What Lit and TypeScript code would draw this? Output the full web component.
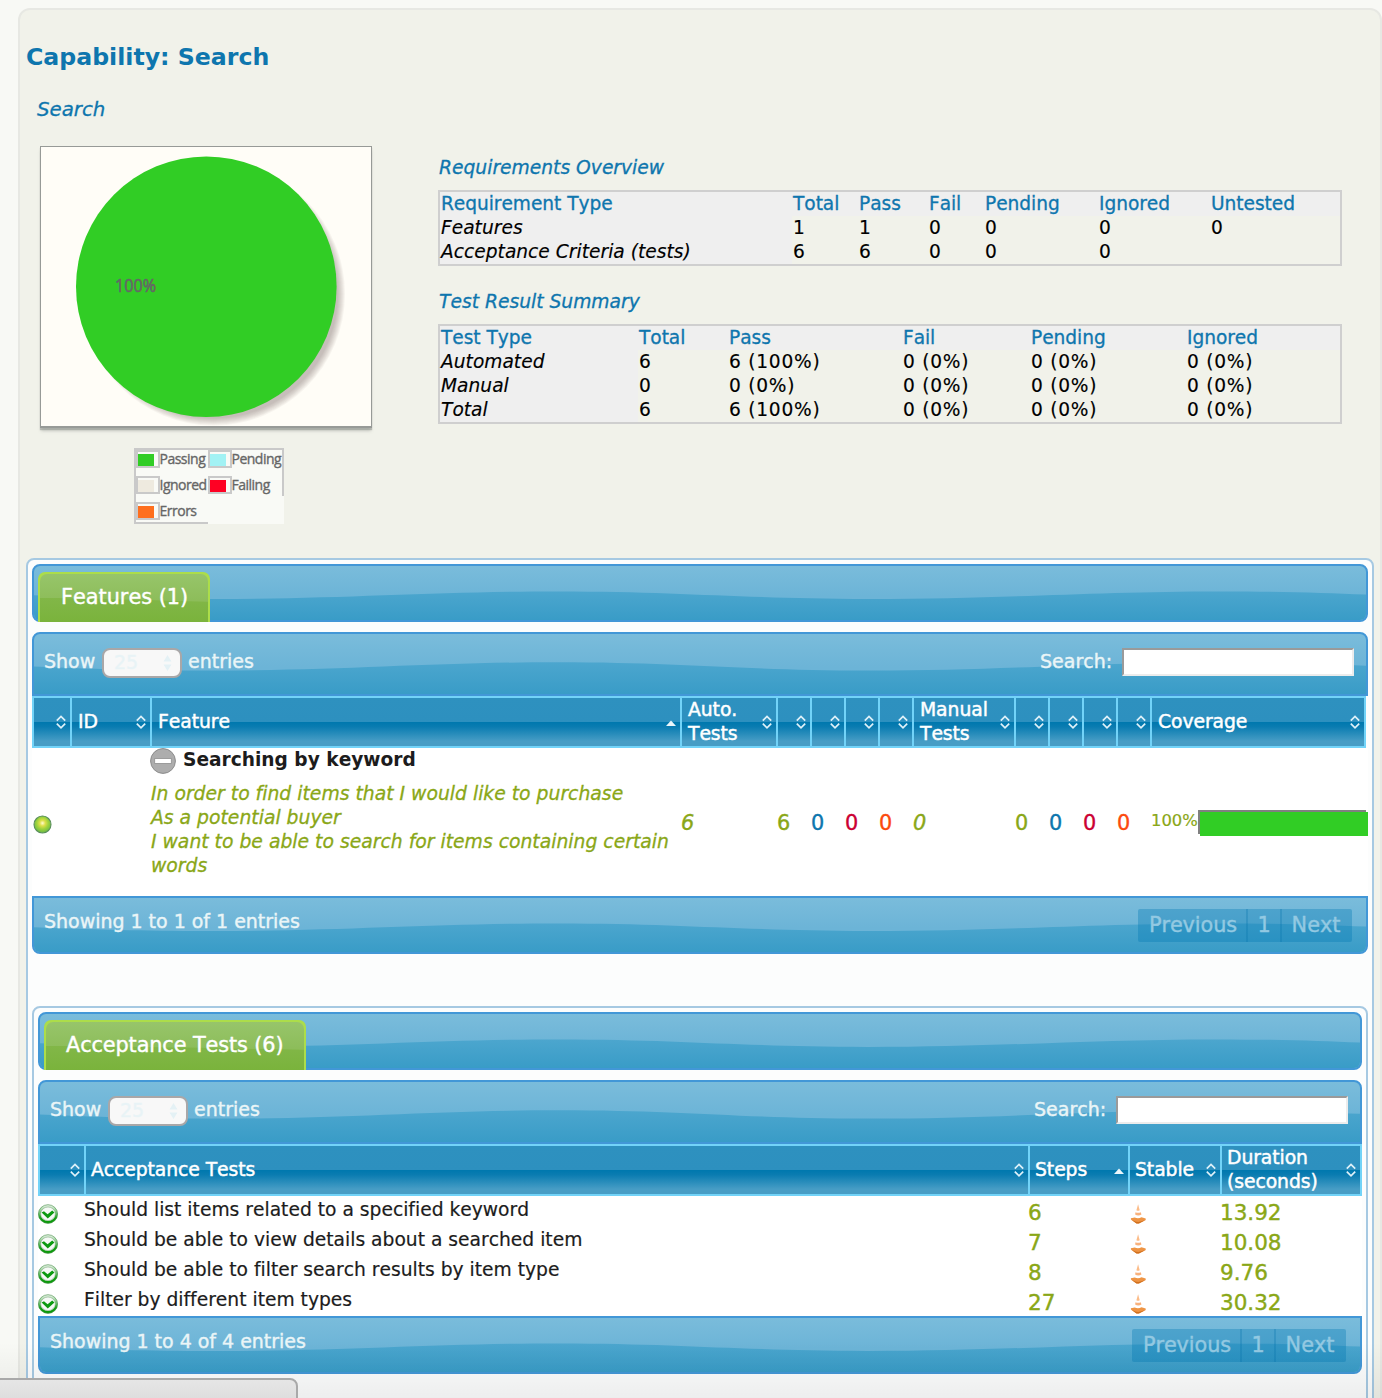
import { LitElement, html, css, svg, nothing } from "lit";
import { customElement, property } from "lit/decorators.js";
import { classMap } from "lit/directives/class-map.js";

const base = css`
  :host {
    display: block;
    box-sizing: border-box;
    font-family: "DejaVu Sans", Verdana, sans-serif;
    font-kerning: none;
    font-variant-ligatures: none;
  }
  * {
    box-sizing: border-box;
  }
`;

@customElement("gloss-wave")
class GlossWave extends LitElement {
  @property() tone = "blue";

  static styles = css`
    :host {
      position: absolute;
      inset: 0;
      overflow: hidden;
      border-radius: inherit;
    }
    .art {
      display: block;
      width: 100%;
      height: 100%;
    }
  `;

  render() {
    const green = this.tone === "green";
    const c = green
      ? ["#97c56a", "#8dbd5a", "#82b748", "#7ab33c"]
      : ["#7abcdb", "#6cb4d7", "#4ca6ce", "#399cc7"];
    const d = green
      ? "M0 50 C45 50 120 55 168 58 V100 H0 Z"
      : "M0 54 C70 59 125 61 180 61 C310 61 400 47 524 47 C650 47 710 61 835 61 C970 61 1060 47 1186 47 C1250 47 1290 50 1332 53 V100 H0 Z";
    return html`<svg class="art" viewBox=${green ? "0 0 168 100" : "0 0 1332 100"} preserveAspectRatio="none">
      <defs>
        <linearGradient id="t" x1="0" y1="0" x2="0" y2="1">
          <stop offset="0" stop-color=${c[0]}></stop>
          <stop offset=".55" stop-color=${c[1]}></stop>
        </linearGradient>
        <linearGradient id="b" gradientUnits="userSpaceOnUse" x1="0" y1="47" x2="0" y2="100">
          <stop offset="0" stop-color=${c[2]}></stop>
          <stop offset="1" stop-color=${c[3]}></stop>
        </linearGradient>
      </defs>
      <rect width="1332" height="100" fill="url(#t)"></rect>
      <path d=${d} fill="url(#b)"></path>
    </svg>`;
  }
}

@customElement("tab-bar")
class TabBar extends LitElement {
  @property() label = "";
  @property({ type: Boolean }) wide = false;

  static styles = [
    base,
    css`
      .bar {
        position: relative;
        display: flex;
        height: 58px;
        padding: 6px 0 0 4px;
        border: 2px solid #4297d7;
        border-radius: 8px;
        background: #4297d7;
      }
      .bar > gloss-wave {
        border-radius: 6px;
      }
      .tab {
        position: relative;
        width: 172px;
        height: 50px;
        padding-left: 21px;
        border: 2px solid #acdd4a;
        border-bottom: 0;
        border-radius: 7px 7px 0 0;
        background: #acdd4a;
        color: #fff;
        font-size: 20.8px;
        line-height: 47px;
        white-space: nowrap;
      }
      .tab.wide {
        width: 262px;
        padding-left: 20px;
        letter-spacing: -0.1px;
      }
      .text {
        position: relative;
        -webkit-text-stroke: 0.4px #fff;
      }
    `,
  ];

  render() {
    return html`<div class="bar">
      <gloss-wave></gloss-wave>
      <div class=${classMap({ tab: true, wide: this.wide })}>
        <gloss-wave tone="green"></gloss-wave>
        <span class="text">${this.label}</span>
      </div>
    </div>`;
  }
}

@customElement("table-toolbar")
class TableToolbar extends LitElement {
  static styles = [
    base,
    css`
      .bar {
        position: relative;
        display: flex;
        align-items: flex-start;
        height: 64px;
        padding: 14px 12px 0 10px;
        border: 2px solid #4297d7;
        border-radius: 8px 8px 0 0;
        background: #4297d7;
        color: #eaf5f7;
        font-size: 19px;
        line-height: 26px;
        white-space: nowrap;
        -webkit-text-stroke: 0.4px #eaf5f7;
      }
      .bar > * {
        position: relative;
      }
      .bar > gloss-wave {
        position: absolute;
        border-radius: 6px 6px 0 0;
      }
      .show {
        width: 58px;
      }
      .select {
        display: flex;
        justify-content: space-between;
        align-items: center;
        width: 80px;
        height: 30px;
        padding: 0 8px 0 10px;
        margin-right: 6px;
        border: 2px solid #a9a7a8;
        border-radius: 8px;
        background: #f8f8f8;
        color: #e8f3f6;
        line-height: 24px;
      }
      .value {
        margin-top: -2px;
      }
      .search {
        margin-left: auto;
        width: 82px;
      }
      .input {
        width: 232px;
        height: 28px;
        border: 2px solid;
        border-color: #9a9a9a #ececec #ececec #9a9a9a;
        background: #fff;
      }
    `,
  ];

  render() {
    return html`<div class="bar">
      <gloss-wave></gloss-wave>
      <span class="show">Show</span>
      <span class="select"
        ><span class="value">25</span
        ><svg width="9" height="18" viewBox="0 0 9 18" fill="#e4f1f5">
          <path d="M4.5 1 L8.5 7.5 H0.5 Z M4.5 17 L0.5 10.5 H8.5 Z"></path></svg
      ></span>
      <span>entries</span>
      <span class="search">Search:</span>
      <span class="input"></span>
    </div>`;
  }
}

@customElement("table-footer")
class TableFooter extends LitElement {
  @property() label = "";

  static styles = [
    base,
    css`
      .bar {
        position: relative;
        display: flex;
        justify-content: space-between;
        height: 58px;
        padding: 11px 14px 0 10px;
        border: 2px solid #4297d7;
        border-radius: 0 0 8px 8px;
        background: #4297d7;
        color: #eaf5f7;
        font-size: 19px;
        line-height: 24px;
        white-space: nowrap;
      }
      .bar > gloss-wave {
        border-radius: 0 0 6px 6px;
      }
      .label {
        position: relative;
        letter-spacing: -0.02px;
        -webkit-text-stroke: 0.4px #eaf5f7;
      }
      .pages {
        position: relative;
        display: flex;
        gap: 2px;
        height: 33px;
        background: linear-gradient(90deg, transparent 108px, rgba(0, 116, 174, 0.52) 108px 110px, transparent 110px 142px, rgba(0, 116, 174, 0.52) 142px 144px, transparent 144px);
        border-radius: 2px;
        overflow: hidden;
      }
      .page {
        width: 32px;
        background: rgba(0, 120, 178, 0.34);
        color: #93c9e2;
        font-size: 20.8px;
        line-height: 32px;
        text-align: center;
        -webkit-text-stroke: 0.4px #93c9e2;
      }
      .page.previous {
        width: 108px;
        padding-left: 2px;
        letter-spacing: -0.1px;
      }
      .page.next {
        width: 70px;
        padding-right: 2px;
      }
    `,
  ];

  render() {
    return html`<div class="bar">
      <gloss-wave></gloss-wave>
      <span class="label">${this.label}</span>
      <div class="pages">
        <span class="page previous">Previous</span><span class="page">1</span><span class="page next">Next</span>
      </div>
    </div>`;
  }
}

type Head = { text?: string; up?: boolean };

@customElement("table-head")
class TableHead extends LitElement {
  @property({ attribute: false }) heads: Head[] = [];
  @property() kind = "features";

  static styles = [
    base,
    css`
      .row {
        display: grid;
        height: 52px;
        border: 2px solid #72d3f8;
        border-left: 0;
        background: linear-gradient(#2e91bf, #2d90bf 50%, #0078ae 51%, #0a7cb1 60%, #479dc5 90%, #479dc5);
        color: #fff;
        font-size: 18.8px;
        line-height: 24px;
      }
      .features {
        width: 1334px;
        grid-template-columns: 38px 80px 530px 96px repeat(4, 34px) 102px repeat(4, 34px) 1fr;
      }
      .tests {
        grid-template-columns: 46px 944px 100px 92px 1fr;
      }
      .cell {
        display: flex;
        align-items: center;
        justify-content: space-between;
        border-left: 2px solid #72d3f8;
        padding: 0 4px 0 6px;
        min-width: 0;
      }
      .tests .cell {
        padding-left: 5px;
      }
      .label {
        padding-bottom: 0;
        margin-top: 0;
        margin-bottom: 0.5px;
        white-space: pre-line;
        letter-spacing: -0.08px;
        -webkit-text-stroke: 0.45px #fff;
      }
      .sort {
        flex: none;
      }
    `,
  ];

  render() {
    return html`<div class="row ${this.kind}">
      ${this.heads.map(
        (h) => html`<div class="cell">
          <span class="label">${h.text ?? nothing}</span>
          <svg class="sort" width="10" height="14" viewBox="0 0 10 14">
            ${h.up
              ? svg`<path d="M0 11 L5 5.6 L10 11 Z" fill="#eaf6fb"></path>`
              : svg`<path d="M.8 5.6 L5 1.4 L9.2 5.6 M.8 8.6 L5 12.8 L9.2 8.6" fill="none" stroke="#dff1f9" stroke-width="1.7"></path>`}
          </svg>
        </div>`
      )}
    </div>`;
  }
}

@customElement("result-chart")
class ResultChart extends LitElement {
  static styles = [
    base,
    css`
      .frame {
        width: 332px;
        height: 282px;
        border: 1px solid #979a97;
        border-bottom-width: 2px;
        background: #fffdf7;
        box-shadow: 0 2px 1px rgba(120, 125, 120, 0.4), 0 4px 3px -1px rgba(120, 125, 120, 0.35);
      }
      .pie {
        display: block;
        margin: -1px;
      }
      .share {
        font: 17.5px "Open Sans", "Noto Sans", sans-serif;
        fill: #666;
        stroke: #666;
        stroke-width: 0.6px;
      }
      .legend {
        position: relative;
        display: grid;
        grid-template-columns: 72px 1fr;
        grid-template-rows: 26px 26px 1fr;
        width: 150px;
        height: 76px;
        margin: 20px 0 0 94px;
        border: 2px solid #c9c9c9;
        border-right: 0;
        border-bottom: 0;
        background: #f9faf6;
        color: #666;
        font: 14px/18px "Open Sans", "Noto Sans", sans-serif;
        letter-spacing: -0.5px;
        -webkit-text-stroke: 0.35px #666;
      }
      .legend::after {
        content: "";
        position: absolute;
        right: 0;
        top: 0;
        width: 2px;
        height: 46px;
        background: #c9c9c9;
      }
      .entry {
        display: flex;
        white-space: nowrap;
      }
      .entry.last {
        border-bottom: 2px solid #c9c9c9;
      }
      .swatch {
        flex: none;
        width: 24px;
        height: 18px;
        padding: 2px 4px 0 0;
        margin-right: -0.5px;
        border: 2px solid #c9c9c9;
      }
      .fill {
        display: block;
        height: 12px;
      }
      .passing {
        background: #31cd25;
      }
      .pending {
        background: #a2f2f4;
      }
      .ignored {
        background: #eeeadf;
      }
      .failing {
        background: #fe0123;
      }
      .errors {
        background: #fe6f1e;
      }
    `,
  ];

  render() {
    const names = ["Passing", "Pending", "Ignored", "Failing", "Errors"];
    return html`
      <div class="frame">
        <svg class="pie" width="331" height="280" viewBox="40 146 331 280">
          ${[0, 1, 2, 3, 4, 5, 6, 7].map(
            (i) => svg`<circle cx="213.5" cy="294" r=${131.5 - i} fill="#5a5353" fill-opacity=".05"></circle>`
          )}
          <circle cx="206.3" cy="286.7" r="130.3" fill="#31cd25"></circle>
          <text class="share" x="115" y="291.5" textLength="41" lengthAdjust="spacingAndGlyphs">100%</text>
        </svg>
      </div>
      <div class="legend">
        ${names.map(
          (n) => html`<div class=${classMap({ entry: true, last: n === "Errors" })}>
            <span class="swatch"><span class="fill ${n.toLowerCase()}"></span></span>${n}
          </div>`
        )}
      </div>
    `;
  }
}

@customElement("summary-table")
class SummaryTable extends LitElement {
  @property() caption = "";
  @property() kind = "requirements";
  @property({ attribute: false }) rows: string[][] = [];

  static styles = [
    base,
    css`
      .caption {
        padding: 1px 0 10px 1px;
        color: #0e76ae;
        font-size: 18.7px;
        font-style: italic;
        line-height: 24px;
        -webkit-text-stroke: 0.3px #0e76ae;
      }
      .table {
        width: 904px;
        border: 2px solid #cfcfcf;
        color: #000;
        font-size: 18.6px;
        line-height: 24px;
        -webkit-text-stroke: 0.15px #000;
      }
      .row {
        display: grid;
        height: 24px;
      }
      .requirements .row {
        grid-template-columns: 352px 66px 70px 56px 114px 112px 1fr;
      }
      .results .row {
        grid-template-columns: 198px 90px 174px 128px 156px 1fr;
      }
      .cell {
        padding-left: 1px;
        white-space: nowrap;
        letter-spacing: 0.75px;
      }
      .row.head {
        background: #efefef;
        color: #0e76ae;
        -webkit-text-stroke: 0.3px #0e76ae;
      }
      .row.head .cell {
        letter-spacing: -0.05px;
      }
      .cell.first {
        letter-spacing: 0.03px;
        background: #efefef;
        font-style: italic;
      }
      .row.head .cell.first {
        font-style: normal;
      }
    `,
  ];

  render() {
    return html`<div class="caption">${this.caption}</div>
      <div class="table ${this.kind}">
        ${this.rows.map(
          (r, i) => html`<div class=${classMap({ row: true, head: i === 0 })}>
            ${r.map((c, j) => html`<span class=${classMap({ cell: true, first: j === 0 })}>${c}</span>`)}
          </div>`
        )}
      </div>`;
  }
}

const tick = html`<svg width="20" height="20" viewBox="0 0 20 20">
  <defs>
    <linearGradient id="ring" x1="0" y1="0" x2="0" y2="1">
      <stop offset="0" stop-color="#dcefdc"></stop>
      <stop offset=".4" stop-color="#7cc67c"></stop>
      <stop offset=".75" stop-color="#12a012"></stop>
      <stop offset="1" stop-color="#079a07"></stop>
    </linearGradient>
  </defs>
  <ellipse cx="10" cy="10" rx="8.6" ry="8.2" fill="#f6f9f6" stroke="url(#ring)" stroke-width="2.4"></ellipse>
  <ellipse cx="10" cy="10" rx="9.6" ry="9.3" fill="none" stroke="#4f8f4f" stroke-width=".6"></ellipse>
  <ellipse cx="10" cy="9.8" rx="7.3" ry="6.8" fill="none" stroke="#7aa07a" stroke-width=".5"></ellipse>
  <path d="M3.6 8.6 L6 7.2 L9.6 10.2 L14.2 6.6 L16.4 8.4 L9.8 14.4 Z" fill="#0c9a10"></path>
</svg>`;

const cone = html`<svg width="18" height="20" viewBox="-2.5 0 18 20">
  <path d="M7.6 .3 L5.9 6.2 Q7.7 7.2 9.2 6.2 Z" fill="#fcbc88"></path>
  <path d="M5 8.2 Q7.7 9.2 10.2 8.2 L11 10.6 Q7.7 12.6 4.6 10.6 Z" fill="#f9b17c"></path>
  <path d="M4.2 13.4 Q7.7 15 11 13.2 L15.2 14.6 V16 L8.4 19.4 L6 19.4 L.4 15.6 V14.2 Z" fill="#ee9444"></path>
  <path d="M.8 15.8 L6 19.4 L8.4 19.4 L15.2 16 L8 18 L5.6 17.8 Z" fill="#d0701f"></path>
</svg>`;

@customElement("app-root")
class AppRoot extends LitElement {
  static styles = [
    base,
    css`
      :host {
        position: relative;
        height: 1398px;
        overflow: hidden;
        background: #f8f9f5;
        padding: 8px 0 0 18px;
      }
      .page {
        width: 1364px;
        height: 1420px;
        padding: 0 6px;
        border: 2px solid #e7e8e3;
        border-radius: 12px;
        background: #f1f2ea;
      }
      .title {
        margin: 0;
        padding-top: 32px;
        color: #0e76ae;
        font-size: 23.65px;
        font-weight: bold;
        line-height: 30px;
      }
      .subtitle {
        margin: 24px 0 0 11px;
        color: #0e76ae;
        font-size: 19.8px;
        font-style: italic;
        line-height: 27px;
        height: 24px;
        -webkit-text-stroke: 0.3px #0e76ae;
      }
      .overview {
        display: flex;
        height: 438px;
        padding: 26px 0 0 14px;
      }
      .chart {
        width: 398px;
      }
      .tables {
        display: flex;
        flex-direction: column;
        gap: 23px;
        padding-top: 9px;
      }
      .panel {
        width: 1348px;
        height: 900px;
        padding: 4px;
        border: 2px solid #a6c9e2;
        border-radius: 8px;
        background: #fcfdfd;
      }
      .panel.inner {
        width: 1336px;
        height: 440px;
        margin-top: 52px;
      }
      .gap {
        height: 10px;
      }
      .feature {
        display: grid;
        grid-template-columns: 38px 80px 530px 96px repeat(4, 34px) 102px repeat(4, 34px) 1fr;
        align-items: center;
        height: 148px;
        background: #fff;
        color: #8aa717;
        font-size: 20.8px;
      }
      .count {
        padding: 1px 0 0 1px;
        -webkit-text-stroke: 0.4px currentColor;
      }
      .lamp {
        display: block;
        margin: 4px 0 0 1px;
      }
      .story {
        align-self: start;
      }
      .name {
        display: flex;
        height: 34px;
        color: #1c1c1c;
        font-size: 18.6px;
        font-weight: bold;
        line-height: 24px;
      }
      .toggle {
        margin-right: 7px;
      }
      .narrative {
        padding-left: 1px;
        font-size: 18.8px;
        font-style: italic;
        line-height: 24px;
        white-space: pre;
        -webkit-text-stroke: 0.3px #8aa717;
      }
      .blue {
        color: #0e76ae;
      }
      .red {
        color: #cc0033;
      }
      .orange {
        color: #fc4a0e;
      }
      .slant {
        font-style: italic;
      }
      .coverage {
        display: flex;
        margin-top: -1px;
      }
      .percent {
        width: 48px;
        padding-left: 1px;
        font-size: 16.4px;
        line-height: 22px;
        -webkit-text-stroke: 0.2px currentColor;
      }
      .track {
        width: 168px;
        height: 24px;
        border: 2px solid #808080;
        border-right: 0;
        border-bottom: 0;
      }
      .amount {
        width: 168px;
        height: 24px;
        background: #31cd25;
      }
      .test {
        display: grid;
        grid-template-columns: 46px 944px 100px 92px 1fr;
        height: 30px;
        background: #fff;
        color: #8aa717;
        font-size: 21.5px;
        line-height: 33px;
        -webkit-text-stroke: 0.4px currentColor;
      }
      .test svg {
        display: block;
        margin-top: 7.5px;
      }
      .label {
        color: #1c1c1c;
        font-size: 18.7px;
        line-height: 27px;
        -webkit-text-stroke: 0.2px currentColor;
      }
      .shade {
        position: absolute;
        left: 0;
        right: 0;
        bottom: 0;
        height: 56px;
        background: linear-gradient(rgba(0, 0, 0, 0), rgba(0, 0, 0, 0.06));
        pointer-events: none;
      }
      .status {
        position: absolute;
        left: -2px;
        bottom: -2px;
        width: 300px;
        height: 22px;
        border: 2px solid #a9a9a9;
        border-radius: 0 8px 0 0;
        background: linear-gradient(#e6e6e6, #dedede);
      }
    `,
  ];

  render() {
    const requirements = [
      ["Requirement Type", "Total", "Pass", "Fail", "Pending", "Ignored", "Untested"],
      ["Features", "1", "1", "0", "0", "0", "0"],
      ["Acceptance Criteria (tests)", "6", "6", "0", "0", "0", ""],
    ];
    const results = [
      ["Test Type", "Total", "Pass", "Fail", "Pending", "Ignored"],
      ["Automated", "6", "6 (100%)", "0 (0%)", "0 (0%)", "0 (0%)"],
      ["Manual", "0", "0 (0%)", "0 (0%)", "0 (0%)", "0 (0%)"],
      ["Total", "6", "6 (100%)", "0 (0%)", "0 (0%)", "0 (0%)"],
    ];
    const featureHeads: Head[] = [
      {}, { text: "ID" }, { text: "Feature", up: true }, { text: "Auto.\nTests" }, {}, {}, {}, {},
      { text: "Manual\nTests" }, {}, {}, {}, {}, { text: "Coverage" },
    ];
    const testHeads: Head[] = [
      {}, { text: "Acceptance Tests" }, { text: "Steps", up: true }, { text: "Stable" }, { text: "Duration\n(seconds)" },
    ];
    const counts = [
      ["6", "slant"], ["6", ""], ["0", "blue"], ["0", "red"], ["0", "orange"],
      ["0", "slant"], ["0", ""], ["0", "blue"], ["0", "red"], ["0", "orange"],
    ];
    const tests = [
      ["Should list items related to a specified keyword", "6", "13.92"],
      ["Should be able to view details about a searched item", "7", "10.08"],
      ["Should be able to filter search results by item type", "8", "9.76"],
      ["Filter by different item types", "27", "30.32"],
    ];
    const narrative =
      "In order to find items that I would like to purchase\nAs a potential buyer\nI want to be able to search for items containing certain\nwords";

    return html`
      <div class="page">
        <h2 class="title">Capability: Search</h2>
        <div class="subtitle">Search</div>
        <div class="overview">
          <result-chart class="chart"></result-chart>
          <div class="tables">
            <summary-table caption="Requirements Overview" .rows=${requirements}></summary-table>
            <summary-table caption="Test Result Summary" kind="results" .rows=${results}></summary-table>
          </div>
        </div>
        <div class="panel">
          <tab-bar label="Features (1)"></tab-bar>
          <div class="gap"></div>
          <table-toolbar></table-toolbar>
          <table-head .heads=${featureHeads}></table-head>
          <div class="feature">
            <svg class="lamp" width="19" height="19" viewBox="0 0 19 19">
              <defs>
                <radialGradient id="glow" cx=".5" cy=".42" r=".55">
                  <stop offset="0" stop-color="#fffbd0"></stop>
                  <stop offset=".3" stop-color="#dde04a"></stop>
                  <stop offset=".62" stop-color="#9fd23c"></stop>
                  <stop offset="1" stop-color="#6cbb45"></stop>
                </radialGradient>
              </defs>
              <circle cx="9.5" cy="9.5" r="8.5" fill="url(#glow)" stroke="#5a8f5c" stroke-width="1.1"></circle>
            </svg>
            <span></span>
            <div class="story">
              <div class="name">
                <svg class="toggle" width="26" height="26" viewBox="0 0 26 26">
                  <circle cx="13" cy="13" r="12.4" fill="#adadad" stroke="#8b8b8b"></circle>
                  <rect x="4.7" y="10.6" width="16.6" height="4.8" fill="#fff" stroke="#8f8f8f" stroke-width=".8"></rect>
                </svg>
                Searching by keyword
              </div>
              <div class="narrative">${narrative}</div>
            </div>
            ${counts.map(([n, tone]) => html`<span class="count ${tone}">${n}</span>`)}
            <div class="coverage">
              <span class="percent">100%</span>
              <div class="track"><div class="amount"></div></div>
            </div>
          </div>
          <table-footer label="Showing 1 to 1 of 1 entries"></table-footer>
          <div class="panel inner">
            <tab-bar wide label="Acceptance Tests (6)"></tab-bar>
            <div class="gap"></div>
            <table-toolbar></table-toolbar>
            <table-head kind="tests" .heads=${testHeads}></table-head>
            ${tests.map(
              ([name, steps, time]) => html`<div class="test">
                ${tick}<span class="label">${name}</span><span>${steps}</span>${cone}<span>${time}</span>
              </div>`
            )}
            <table-footer label="Showing 1 to 4 of 4 entries"></table-footer>
          </div>
        </div>
      </div>
      <div class="shade"></div>
      <div class="status"></div>
    `;
  }
}
